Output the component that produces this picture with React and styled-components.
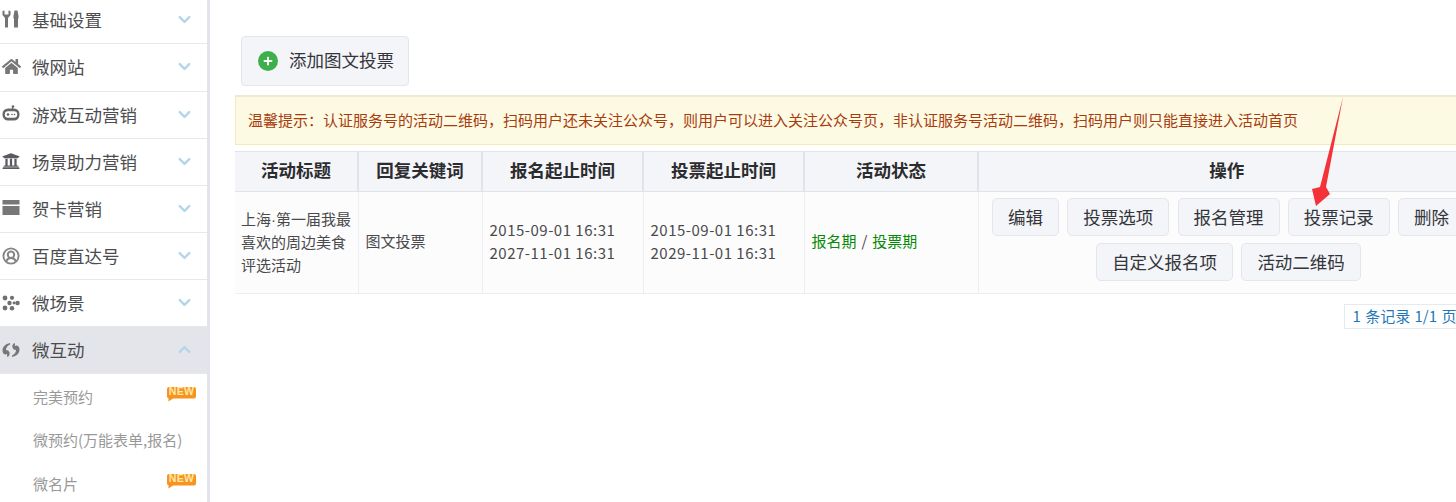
import React from "react";
import styled, { createGlobalStyle } from "styled-components";
import { FaHome, FaUniversity, FaPlus } from "react-icons/fa";
import { FiChevronDown, FiChevronUp } from "react-icons/fi";

const Global = createGlobalStyle`
  html, body { margin: 0; padding: 0; background: #fff; }
  body { width: 1456px; height: 502px; overflow: hidden; font-family: "Noto Sans CJK SC", "Liberation Sans", sans-serif; }
`;

const ToolsIcon = () => (
  <svg width="18" height="18" viewBox="0 0 18 18" fill="#737373">
    <path d="M0.500 1L2.500 .5V4.500H6.500V.5L8.500 1V5L6 8V17.500H3V8L.5 5z" />
    <path d="M12.500 .5H15.500L16.500 6V8.500H16V17.500H12V8.500H11.500V6z" />
  </svg>
);
const GameIcon = () => (
  <svg width="18" height="18" viewBox="0 0 18 18">
    <circle cx="11" cy="1.500" r="1.300" fill="#666" />
    <path d="M10.500 1.500V4" stroke="#666" strokeWidth="1.200" />
    <rect x="0.500" y="3.500" width="17" height="12" rx="5.500" fill="#666" />
    <rect x="2.800" y="6.300" width="12.400" height="6.400" rx="3.200" fill="#fff" />
    <circle cx="6" cy="9.500" r="1.300" fill="#666" />
    <circle cx="10" cy="9.500" r="0.800" fill="#666" />
    <circle cx="12.500" cy="9.500" r="0.800" fill="#666" />
  </svg>
);
const CardIcon = () => (
  <svg width="18" height="18" viewBox="0 0 18 18" fill="#777">
    <rect x="0.500" y="1" width="17" height="4.500" />
    <rect x="0.500" y="7" width="17" height="9" />
  </svg>
);
const DirectIcon = () => (
  <svg width="18" height="18" viewBox="0 0 18 18" fill="none" stroke="#858585">
    <circle cx="9" cy="9" r="7.600" strokeWidth="1.900" />
    <circle cx="9" cy="7.800" r="3.200" strokeWidth="2" />
    <path d="M4 14.500c1-2.300 2.800-3.400 5-3.400s4 1.100 5 3.400" strokeWidth="2" />
  </svg>
);
const SceneIcon = () => (
  <svg width="18" height="18" viewBox="0 0 18 18" fill="#707070">
    <circle cx="3" cy="4" r="2.400" />
    <circle cx="3" cy="14" r="2.400" />
    <circle cx="7.500" cy="9" r="2.200" />
    <circle cx="10" cy="3.800" r="2.100" />
    <circle cx="10" cy="14.200" r="2.300" />
    <circle cx="15.500" cy="9" r="2.300" />
    <circle cx="12" cy="9" r="1.400" />
  </svg>
);
const InteractIcon = () => (
  <svg width="18" height="18" viewBox="0 0 18 18" fill="#777">
    <path d="M8 2C3.500 3 .5 5.500 .5 9.500c0 2.500 1.500 4 3 4 .8 0 1.300-.3 1.700-.7-.3 1.400-.3 2.500.3 3.200 1.800-.8 2.500-2.800 2-4.500C7 9.800 5.500 9 4 9c0-2.500 1.500-4.500 4-5.500z" />
    <path d="M10 16c4.500-1 7.500-3.500 7.500-7.500 0-2.500-1.500-4-3-4-.8 0-1.300.3-1.700.7.3-1.400.3-2.500-.3-3.200-1.800.8-2.500 2.800-2 4.500.5 1.700 2 2.500 3.500 2.500 0 2.500-1.500 4.500-4 5.500z" />
  </svg>
);
const NewBadge = () => (
  <Badge>
    <svg width="29" height="15" viewBox="0 0 29 15">
      <path d="M2 0h25a2 2 0 0 1 2 2v7.500a2 2 0 0 1-2 2H6L1.500 14.500V11.300A2 2 0 0 1 0 9.500V2a2 2 0 0 1 2-2z" fill="#f7931e" />
    </svg>
    <BadgeText>NEW</BadgeText>
  </Badge>
);

const menus = [
  { name: "基础设置", icon: <ToolsIcon /> },
  { name: "微网站", icon: <FaHome size={19} color="#777" /> },
  { name: "游戏互动营销", icon: <GameIcon /> },
  { name: "场景助力营销", icon: <FaUniversity size={18} color="#5a5a60" /> },
  { name: "贺卡营销", icon: <CardIcon /> },
  { name: "百度直达号", icon: <DirectIcon /> },
  { name: "微场景", icon: <SceneIcon /> },
  { name: "微互动", icon: <InteractIcon />, open: true },
];

const subMenus = [
  { name: "完美预约", isNew: true },
  { name: "微预约(万能表单,报名)" },
  { name: "微名片", isNew: true },
];

const columns = [
  { title: "活动标题", width: 123 },
  { title: "回复关键词", width: 124 },
  { title: "报名起止时间", width: 161 },
  { title: "投票起止时间", width: 161 },
  { title: "活动状态", width: 174 },
  { title: "操作", width: 497 },
];

const actions = ["编辑", "投票选项", "报名管理", "投票记录", "删除", "自定义报名项", "活动二维码"];

export default function App() {
  return (
    <Page>
      <Global />
      <Sidebar>
        {menus.map((m) => (
          <MenuItem key={m.name} $open={m.open}>
            <MenuIcon>{m.icon}</MenuIcon>
            <MenuName>{m.name}</MenuName>
            <Chevron>{m.open ? <FiChevronUp size={19} strokeWidth={3} /> : <FiChevronDown size={19} strokeWidth={3} />}</Chevron>
          </MenuItem>
        ))}
        {subMenus.map((s) => (
          <SubItem key={s.name}>
            {s.name}
            {s.isNew && <NewBadge />}
          </SubItem>
        ))}
      </Sidebar>
      <Main>
        <AddButton>
          <PlusCircle><FaPlus size={10} /></PlusCircle>
          <AddLabel>添加图文投票</AddLabel>
        </AddButton>
        <Notice>
          温馨提示：认证服务号的活动二维码，扫码用户还未关注公众号，则用户可以进入关注公众号页，非认证服务号活动二维码，扫码用户则只能直接进入活动首页
        </Notice>
        <Table>
          <colgroup>
            {columns.map((c) => <col key={c.title} width={c.width} />)}
          </colgroup>
          <thead>
            <tr>{columns.map((c) => <Th key={c.title}>{c.title}</Th>)}</tr>
          </thead>
          <tbody>
            <tr>
              <TitleCell>上海·第一届我最喜欢的周边美食评选活动</TitleCell>
              <Td>图文投票</Td>
              <Td><Dates>2015-09-01 16:31<br />2027-11-01 16:31</Dates></Td>
              <Td><Dates>2015-09-01 16:31<br />2029-11-01 16:31</Dates></Td>
              <Td>
                <StatusLine><Status>报名期</Status> / <Status>投票期</Status></StatusLine>
              </Td>
              <ActionCell>
                <Actions>
                  {actions.map((a) => <ActionButton key={a}>{a}</ActionButton>)}
                </Actions>
              </ActionCell>
            </tr>
          </tbody>
        </Table>
        <Pager>
          <PagerBox>1 条记录 1/1 页</PagerBox>
        </Pager>
      </Main>
      <Arrow width="60" height="125" viewBox="0 0 60 125">
        <path d="M43 7L26 97L30 104L16 116L12 99L20 97Z" fill="#f5323a" />
      </Arrow>
    </Page>
  );
}

const Page = styled.div`
  position: relative;
  display: flex;
  width: 1456px;
  height: 502px;
  overflow: hidden;
`;
const Sidebar = styled.div`
  flex: none;
  width: 207px;
  height: 502px;
  border-right: 3px solid #e1e4ea;
  overflow: hidden;
`;
const MenuItem = styled.div`
  display: flex;
  align-items: center;
  box-sizing: border-box;
  height: 47.15px;
  padding-bottom: 1px;
  border-bottom: 1px solid #e7e8ec;
  background: ${(p) => (p.$open ? "#e4e5ea" : "#fff")};
  &:first-child { height: 44.4px; padding-bottom: 5px; }
`;
const MenuIcon = styled.span`
  display: flex;
  justify-content: center;
  width: 20px;
  margin-left: 1px;
  margin-right: 11px;
`;
const MenuName = styled.span`
  flex: 1;
  font-size: 17.5px;
  color: #4d4d4f;
  white-space: nowrap;
`;
const Chevron = styled.span`
  display: flex;
  margin-right: 13px;
  color: #b3d6e8;
`;
const SubItem = styled.div`
  position: relative;
  display: flex;
  align-items: center;
  height: 43.5px;
  padding-left: 33px;
  font-size: 15px;
  color: #999;
  white-space: nowrap;
`;
const Badge = styled.span`
  position: absolute;
  top: 11px;
  left: 167px;
  width: 29px;
  height: 15px;
`;
const BadgeText = styled.span`
  position: absolute;
  top: 0;
  left: 0;
  width: 29px;
  font-family: "Liberation Sans", sans-serif;
  font-size: 10.5px;
  font-weight: 700;
  letter-spacing: 0.3px;
  line-height: 12px;
  text-align: center;
  color: #ffe9a8;
`;
const Main = styled.div`
  flex: none;
  width: 1300px;
  padding: 36px 0 0 25px;
`;
const AddButton = styled.div`
  display: inline-flex;
  align-items: center;
  box-sizing: border-box;
  height: 50px;
  margin-left: 6px;
  padding: 0 14px 0 16px;
  border: 1px solid #e4e6ec;
  border-radius: 4px;
  background: #f3f5f9;
  font-size: 17.5px;
  color: #33353b;
`;
const AddLabel = styled.span`
  margin-bottom: 3px;
`;
const PlusCircle = styled.span`
  display: flex;
  align-items: center;
  justify-content: center;
  width: 20px;
  height: 20px;
  margin-right: 11px;
  border-radius: 50%;
  background: #3eb04b;
  color: #fff;
`;
const Notice = styled.div`
  box-sizing: border-box;
  width: 1240px;
  height: 50px;
  margin-top: 9px;
  padding: 0 0 2px 12px;
  display: flex;
  align-items: center;
  border: 1px solid #f5e9b5;
  border-top: 2px solid #eee9d2;
  background: #fdfae4;
  font-size: 15px;
  color: #a83c0c;
  white-space: nowrap;
`;
const Table = styled.table`
  table-layout: fixed;
  width: 1240px;
  margin-top: 6px;
  border-collapse: collapse;
`;
const Th = styled.th`
  height: 40px;
  padding: 0 0 5px;
  box-sizing: border-box;
  border: 1px solid #e1e3ea;
  border-left-width: 0;
  background: #f3f5f9;
  font-size: 17.5px;
  font-weight: 700;
  color: #2c2c2e;
  &:not(:first-child) { border-left-width: 2px; }
`;
const Td = styled.td`
  height: 102px;
  box-sizing: border-box;
  padding: 0 0 4px 7px;
  border: 1px solid #eceef2;
  border-left-width: 0;
  background: #fcfcfd;
  font-size: 15px;
  line-height: 23px;
  color: #4a4a4c;
  &:not(:first-child) { border-left-width: 1px; }
`;
const TitleCell = styled(Td)`
  padding: 0 0 0 6px;
  font-family: "Liberation Sans", "Noto Sans CJK SC", sans-serif;
`;
const Dates = styled.span`
  letter-spacing: 0.5px;
`;
const StatusLine = styled.span`
  word-spacing: 1.5px;
`;
const Status = styled.span`
  color: #068a06;
`;
const ActionCell = styled(Td)`
  padding: 0 0 7px 4px;
`;
const Actions = styled.div`
  display: flex;
  flex-wrap: wrap;
  justify-content: center;
  gap: 7px 8.25px;
`;
const ActionButton = styled.div`
  box-sizing: border-box;
  height: 38px;
  padding: 0 15px;
  border: 1px solid #e4e6ec;
  border-radius: 5px;
  background: #f3f5f9;
  font-size: 17.5px;
  line-height: 36px;
  color: #33353b;
  white-space: nowrap;
`;
const Pager = styled.div`
  display: flex;
  margin-top: 10px;
  padding-left: 1109px;
`;
const PagerBox = styled.div`
  box-sizing: border-box;
  height: 25px;
  padding: 0 8px 0 7.5px;
  border: 1px solid #e4eaf0;
  font-size: 15px;
  line-height: 22px;
  word-spacing: 1px;
  color: #1f78b4;
  white-space: nowrap;
`;
const Arrow = styled.svg`
  position: absolute;
  top: 90px;
  left: 1300px;
`;
